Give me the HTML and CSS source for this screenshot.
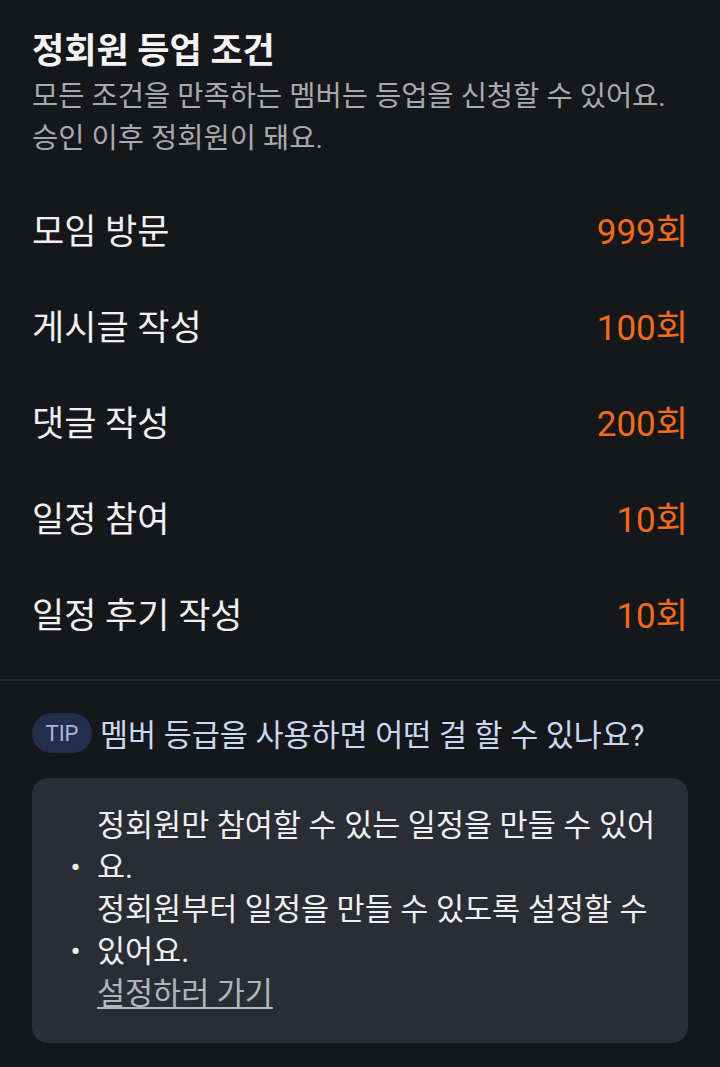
FILE: index.html
```html
<!DOCTYPE html>
<html lang="ko">
<head>
<meta charset="utf-8">
<link rel="stylesheet" href="styles.css">
</head>
<body>
<div class="page">
  <header class="header">
    <h1 class="title">정회원 등업 조건</h1>
    <p class="subtitle">모든 조건을 만족하는 멤버는 등업을 신청할 수 있어요.<br>승인 이후 정회원이 돼요.</p>
  </header>
  <div class="rows">
    <div class="row"><span class="label">모임 방문</span><span class="value">999회</span></div>
    <div class="row"><span class="label">게시글 작성</span><span class="value">100회</span></div>
    <div class="row"><span class="label">댓글 작성</span><span class="value">200회</span></div>
    <div class="row"><span class="label">일정 참여</span><span class="value">10회</span></div>
    <div class="row"><span class="label">일정 후기 작성</span><span class="value">10회</span></div>
  </div>
  <div class="divider"></div>
  <section class="tip">
    <div class="tip-head">
      <span class="badge">TIP</span>
      <span class="question">멤버 등급을 사용하면 어떤 걸 할 수 있나요?</span>
    </div>
    <div class="box">
      <ul class="list">
        <li class="item"><span class="dot">•</span><span class="text">정회원만 참여할 수 있는 일정을 만들 수 있어요.</span></li>
        <li class="item"><span class="dot">•</span><span class="text">정회원부터 일정을 만들 수 있도록 설정할 수 있어요.</span></li>
      </ul>
      <a class="link" href="#">설정하러 가기</a>
    </div>
  </section>
</div>
</body>
</html>
```

FILE: styles.css
```css
html, body {
  margin: 0;
  padding: 0;
  background: #16171b;
}
body {
  font-family: Roboto, "Noto Sans CJK KR", sans-serif;
  color: #f0f0f2;
  width: 720px;
  height: 1067px;
  overflow: hidden;
}
.page {
  display: flex;
  flex-direction: column;
}
.header {
  padding: 32px 32px 0;
}
.title {
  margin: 0;
  font-size: 35px;
  line-height: 40px;
  font-weight: 700;
  color: #f4f4f6;
}
.subtitle {
  margin: 4px 0 0;
  font-size: 28.5px;
  line-height: 42px;
  color: #a8aaaf;
}
.rows {
  margin-top: 20px;
  padding: 0 32px 19px;
  display: flex;
  flex-direction: column;
}
.row {
  height: 96px;
  display: flex;
  align-items: center;
  justify-content: space-between;
}
.label {
  font-size: 35px;
  color: #f0f0f2;
}
.value {
  font-size: 35px;
  color: #f26b1d;
}
.divider {
  height: 2px;
  background: #26282d;
}
.tip {
  padding: 32px 32px 0;
}
.tip-head {
  display: flex;
  align-items: center;
  gap: 8px;
  height: 40px;
}
.badge {
  flex: 0 0 60px;
  height: 40px;
  border-radius: 20px;
  background: #232e4c;
  color: #a9b7d6;
  font-size: 22px;
  display: flex;
  align-items: center;
  justify-content: center;
}
.question {
  font-size: 30.5px;
  color: #c7d9f4;
  white-space: nowrap;
}
.box {
  margin-top: 25px;
  background: #2a2d34;
  border-radius: 16px;
  padding: 27px 28px 28px;
}
.list {
  list-style: none;
  margin: 0;
  padding: 0;
}
.item {
  display: flex;
  align-items: flex-end;
  font-size: 30.5px;
  line-height: 42px;
  color: #f0f0f2;
}
.dot {
  flex: 0 0 31px;
  padding-right: 6px;
  text-align: center;
  font-size: 30px;
}
.text {
  flex: 1;
}
.link {
  display: inline-block;
  margin-left: 37px;
  font-size: 30.5px;
  line-height: 42px;
  color: #b1b5bd;
  text-decoration: underline;
  text-decoration-thickness: 2px;
  text-underline-offset: 3px;
}
```
